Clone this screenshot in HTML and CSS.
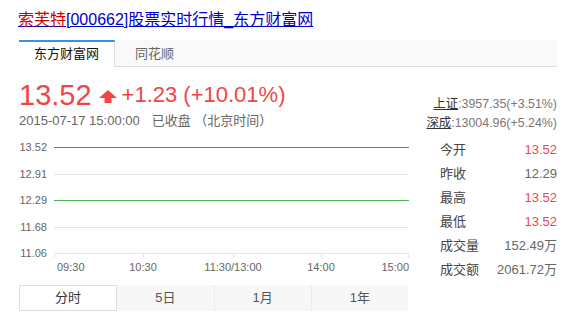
FILE: index.html
```html
<!DOCTYPE html>
<html>
<head>
<meta charset="utf-8">
<link rel="stylesheet" href="styles.css">
</head>
<body>
<div class="page">
  <div class="title"><a class="link"><span class="name">索芙特</span>[000662]股票实时行情_东方财富网</a></div>
  <div class="tabs">
    <div class="tab active">东方财富网</div>
    <div class="tab">同花顺</div>
  </div>
  <div class="main">
    <div class="left">
      <div class="price-row">
        <span class="price">13.52</span>
        <svg class="arrow" width="18" height="13" viewBox="0 0 18 13"><polygon points="9,0 18,8 12.5,8 12.5,13 5.5,13 5.5,8 0,8" fill="#f04646"/></svg>
        <span class="change">+1.23 (+10.01%)</span>
      </div>
      <div class="date-row">2015-07-17 15:00:00<span class="gap"></span>已收盘 （北京时间）</div>
      <svg class="chart" width="390" height="140" viewBox="0 0 390 140">
        <g class="grid">
          <line x1="35" y1="38.5" x2="390" y2="38.5"/>
          <line x1="35" y1="91.5" x2="390" y2="91.5"/>
          <line x1="35" y1="117.5" x2="390" y2="117.5"/>
          <line x1="35.5" y1="117" x2="35.5" y2="122"/>
          <line x1="124.5" y1="117" x2="124.5" y2="122"/>
          <line x1="214.5" y1="117" x2="214.5" y2="122"/>
          <line x1="302.5" y1="117" x2="302.5" y2="122"/>
          <line x1="389.5" y1="117" x2="389.5" y2="122"/>
        </g>
        <line x1="35" y1="11.5" x2="390" y2="11.5" stroke="#3a7ff0" stroke-width="1"/>
        <line x1="35" y1="64.5" x2="390" y2="64.5" stroke="#4cb54c" stroke-width="1"/>
        <g class="ylab">
          <text x="28" y="15">13.52</text>
          <text x="28" y="42">12.91</text>
          <text x="28" y="68">12.29</text>
          <text x="28" y="95">11.68</text>
          <text x="28" y="121">11.06</text>
        </g>
        <g class="xlab">
          <text x="38" y="135" text-anchor="start">09:30</text>
          <text x="124" y="135" text-anchor="middle">10:30</text>
          <text x="214" y="135" text-anchor="middle">11:30/13:00</text>
          <text x="302" y="135" text-anchor="middle">14:00</text>
          <text x="390" y="135" text-anchor="end">15:00</text>
        </g>
      </svg>
      <div class="periods">
        <div class="period on">分时</div>
        <div class="period">5日</div>
        <div class="period">1月</div>
        <div class="period last">1年</div>
      </div>
    </div>
    <div class="right">
      <div class="indices">
        <div class="idx"><span class="ilabel">上证</span>:3957.35(+3.51%)</div>
        <div class="idx"><span class="ilabel">深成</span>:13004.96(+5.24%)</div>
      </div>
      <div class="stats">
        <div class="row"><span class="k">今开</span><span class="v red">13.52</span></div>
        <div class="row"><span class="k">昨收</span><span class="v">12.29</span></div>
        <div class="row"><span class="k">最高</span><span class="v red">13.52</span></div>
        <div class="row"><span class="k">最低</span><span class="v red">13.52</span></div>
        <div class="row"><span class="k">成交量</span><span class="v">152.49万</span></div>
        <div class="row"><span class="k">成交额</span><span class="v">2061.72万</span></div>
      </div>
    </div>
  </div>
</div>
</body>
</html>
```

FILE: styles.css
```css
* { box-sizing: border-box; }
body {
  margin: 0;
  background: #fff;
  font-family: "Liberation Sans", "Noto Sans CJK SC", sans-serif;
  color: #333;
}
.page {
  width: 579px;
  padding-left: 19px;
}
.title {
  height: 40px;
  padding-top: 10px;
  margin-left: -1px;
  font-size: 16px;
  line-height: 20px;
}
.link {
  color: #0000cc;
  text-decoration: underline;
}
.name { color: #cc0000; }
.tabs {
  width: 538px;
  height: 27px;
  background: #f9f9f9;
  border-bottom: 1px solid #ddd;
  display: flex;
  font-size: 13px;
}
.tab {
  height: 27px;
  padding: 0 20px;
  line-height: 24px;
  color: #666;
  border-top: 2px solid transparent;
}
.tab.active {
  width: 96px;
  text-align: center;
  padding: 0;
  background: #fff;
  color: #111;
  border-top: 2px solid #3b8fe8;
  border-right: 1px solid #ddd;
}
.main {
  display: flex;
}
.left {
  width: 390px;
}
.price-row {
  margin-top: 11px;
  height: 34px;
  display: flex;
  align-items: center;
  color: #f04646;
}
.price {
  font-size: 29px;
  line-height: 34px;
}
.arrow {
  margin-left: 7px;
  margin-top: 2px;
}
.change {
  margin-left: 5px;
  font-size: 22px;
  line-height: 34px;
}
.date-row {
  font-size: 13px;
  line-height: 18px;
  color: #666;
}
.gap { display: inline-block; width: 12px; }
.chart {
  display: block;
  margin-top: 6px;
}
.grid line {
  stroke: #e6e6e6;
  stroke-width: 1;
}
.ylab text {
  font-size: 11px;
  fill: #666;
  text-anchor: end;
  font-family: "Liberation Sans", sans-serif;
}
.xlab text {
  font-size: 11px;
  fill: #666;
  font-family: "Liberation Sans", sans-serif;
}
.periods {
  margin-top: 9px;
  width: 389px;
  height: 26px;
  display: flex;
  background: #f7f7f7;
  font-size: 13px;
}
.period {
  flex: 1;
  text-align: center;
  line-height: 26px;
  color: #555;
  border-right: 1px solid #ececec;
}
.period.last { border-right: none; }
.period.on {
  background: #fff;
  color: #333;
  border: 1px solid #ddd;
  line-height: 24px;
}
.right {
  width: 148px;
  display: flex;
  flex-direction: column;
}
.indices {
  margin-top: 28px;
  font-size: 12.4px;
  line-height: 19px;
  color: #777;
  text-align: right;
}
.ilabel {
  color: #333;
  text-decoration: underline;
}
.stats {
  margin-top: 5px;
  padding-left: 31px;
  font-size: 13px;
}
.row {
  height: 24px;
  line-height: 24px;
  display: flex;
  justify-content: space-between;
}
.k { color: #444; }
.v { color: #666; }
.v.red { color: #f04646; }
```
